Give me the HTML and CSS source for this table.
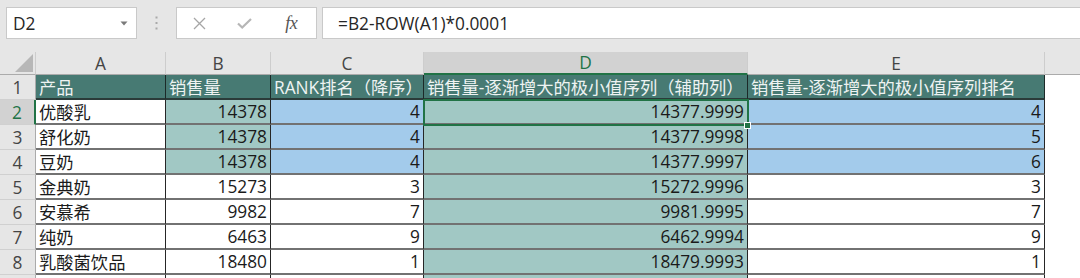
FILE: index.html
```html
<!DOCTYPE html>
<html lang="zh-CN">
<head>
<meta charset="utf-8">
<title>Excel</title>
<link rel="stylesheet" href="styles.css">
</head>
<body>
<div class="toolbar">
  <div class="namebox">
    <span class="ref">D2</span>
    <svg class="caret" width="8" height="5" viewBox="0 0 8 5"><path d="M0.5 0.5H7.5L4 4.5Z" fill="#7a7a7a"/></svg>
  </div>
  <div class="grip">
    <svg width="3" height="14" viewBox="0 0 3 14"><rect x="0.5" y="0.5" width="2" height="2" fill="#a9a9a9"/><rect x="0.5" y="6" width="2" height="2" fill="#a9a9a9"/><rect x="0.5" y="11.5" width="2" height="2" fill="#a9a9a9"/></svg>
  </div>
  <div class="fxbox">
    <span class="slot">
      <svg width="13" height="13" viewBox="0 0 13 13"><path d="M1 1L12 12M12 1L1 12" stroke="#a6a6a6" stroke-width="1.3" fill="none"/></svg>
    </span>
    <span class="slot">
      <svg width="15" height="11" viewBox="0 0 15 11"><path d="M1 5.5L5.2 9.5L14 1" stroke="#b6b6b6" stroke-width="2.2" fill="none"/></svg>
    </span>
    <span class="slot slot-fx"><span class="fx">fx</span></span>
  </div>
  <div class="formula">=B2-ROW(A1)*0.0001</div>
</div>

<div class="sheet">
  <div class="corner"><svg width="18" height="18" viewBox="0 0 18 18"><path d="M18 0V18H0Z" fill="#b7b7b7"/></svg></div>
  <div class="ch">A</div>
  <div class="ch">B</div>
  <div class="ch">C</div>
  <div class="ch sel">D</div>
  <div class="ch">E</div>
  <div class="ch last"></div>

  <div class="c rh">1</div>
  <div class="c hd">产品</div>
  <div class="c hd">销售量</div>
  <div class="c hd">RANK排名（降序）</div>
  <div class="c hd">销售量-逐渐增大的极小值序列（辅助列）</div>
  <div class="c hd">销售量-逐渐增大的极小值序列排名</div>
  <div class="c blank"></div>

  <div class="c rh sel">2</div>
  <div class="c">优酸乳</div>
  <div class="c num teal">14378</div>
  <div class="c num blue">4</div>
  <div class="c num teal active">14377.9999</div>
  <div class="c num blue">4</div>
  <div class="c blank"></div>

  <div class="c rh">3</div>
  <div class="c">舒化奶</div>
  <div class="c num teal">14378</div>
  <div class="c num blue">4</div>
  <div class="c num teal">14377.9998</div>
  <div class="c num blue">5</div>
  <div class="c blank"></div>

  <div class="c rh">4</div>
  <div class="c">豆奶</div>
  <div class="c num teal">14378</div>
  <div class="c num blue">4</div>
  <div class="c num teal">14377.9997</div>
  <div class="c num blue">6</div>
  <div class="c blank"></div>

  <div class="c rh">5</div>
  <div class="c">金典奶</div>
  <div class="c num">15273</div>
  <div class="c num">3</div>
  <div class="c num teal">15272.9996</div>
  <div class="c num">3</div>
  <div class="c blank"></div>

  <div class="c rh">6</div>
  <div class="c">安慕希</div>
  <div class="c num">9982</div>
  <div class="c num">7</div>
  <div class="c num teal">9981.9995</div>
  <div class="c num">7</div>
  <div class="c blank"></div>

  <div class="c rh">7</div>
  <div class="c">纯奶</div>
  <div class="c num">6463</div>
  <div class="c num">9</div>
  <div class="c num teal">6462.9994</div>
  <div class="c num">9</div>
  <div class="c blank"></div>

  <div class="c rh">8</div>
  <div class="c">乳酸菌饮品</div>
  <div class="c num">18480</div>
  <div class="c num">1</div>
  <div class="c num teal">18479.9993</div>
  <div class="c num">1</div>
  <div class="c blank"></div>

  <div class="c rh tail"></div>
  <div class="c tail"></div>
  <div class="c tail"></div>
  <div class="c tail"></div>
  <div class="c teal tail"></div>
  <div class="c tail"></div>
  <div class="c blank tail"></div>
</div>
</body>
</html>
```

FILE: styles.css
```css
html, body {
  margin: 0;
  padding: 0;
}

body {
  width: 1080px;
  height: 278px;
  overflow: hidden;
  background: #ffffff;
  font-family: "Open Sans", "Noto Sans CJK SC", sans-serif;
  font-size: 17.3px;
  color: #1a1a1a;
}

/* ---------- formula toolbar ---------- */
.toolbar {
  height: 52px;
  box-sizing: border-box;
  background: #e6e6e6;
  display: flex;
  align-items: flex-start;
  padding: 7px 0 0 6px;
}

.namebox {
  width: 131px;
  height: 32px;
  box-sizing: border-box;
  background: #ffffff;
  border: 1px solid #c9c9c9;
  display: flex;
  align-items: center;
  justify-content: space-between;
  padding: 0 8px 0 6px;
  color: #262626;
}

.grip {
  width: 39px;
  height: 32px;
  display: flex;
  align-items: center;
  justify-content: center;
}

.fxbox {
  width: 141px;
  height: 32px;
  box-sizing: border-box;
  background: #ffffff;
  border: 1px solid #c9c9c9;
  display: flex;
  align-items: center;
}

.slot {
  width: 45px;
  height: 100%;
  display: flex;
  align-items: center;
  justify-content: center;
}

.slot-fx {
  width: 50px;
}

.fx {
  font-family: "Liberation Serif", "DejaVu Serif", serif;
  font-style: italic;
  font-size: 18px;
  color: #555555;
  letter-spacing: -0.5px;
}

.formula {
  flex: 1;
  margin-left: 5px;
  height: 32px;
  box-sizing: border-box;
  background: #ffffff;
  border: 1px solid #c9c9c9;
  border-right: none;
  display: flex;
  align-items: center;
  padding-left: 15px;
  color: #262626;
}

/* ---------- sheet grid ---------- */
.sheet {
  display: grid;
  grid-template-columns: 36px 130px 105px 153px 324px 297px 1fr;
  grid-template-rows: 23px repeat(8, 25px) 3px;
}

.corner {
  background: #e6e6e6;
  border-right: 1px solid #cdcdcd;
  border-bottom: 1px solid #ababab;
  box-sizing: border-box;
  display: flex;
  align-items: flex-end;
  justify-content: flex-end;
  padding: 0 2px 2px 0;
}

.ch {
  background: #e6e6e6;
  box-sizing: border-box;
  border-right: 1px solid #cdcdcd;
  border-bottom: 1px solid #ababab;
  display: flex;
  align-items: center;
  justify-content: center;
  color: #444444;
}

.ch.sel {
  background: #d2d2d2;
  color: #217346;
  border-bottom: 2px solid #217346;
}

.ch.last {
  border-right: none;
}

.c {
  box-sizing: border-box;
  display: flex;
  align-items: center;
  padding: 0 3px;
  white-space: nowrap;
  overflow: hidden;
  border-right: 1px solid #262626;
  border-bottom: 2px solid #727272;
}

.c.tail {
  border-bottom: none;
}

.num {
  justify-content: flex-end;
}

.rh {
  background: #e6e6e6;
  justify-content: center;
  padding: 0;
  color: #444444;
  border-right: 1px solid #ababab;
  border-bottom: 1px solid #d0d0d0;
}

.rh.sel {
  background: #d2d2d2;
  color: #217346;
  border-right: 2px solid #217346;
}

.hd {
  background: #477a73;
  color: #eef3f2;
  border-right-color: #1c2a28;
  border-bottom-color: #2b3b39;
}

.teal {
  background: #a1c8c4;
}

.blue {
  background: #a3cbeb;
}

.blank {
  border: none;
  background: #ffffff;
}

.active {
  position: relative;
  z-index: 1;
  overflow: visible;
  outline: 2px solid #217346;
  outline-offset: -1px;
}

.active::after {
  content: "";
  position: absolute;
  right: -4px;
  bottom: -6px;
  width: 5px;
  height: 5px;
  background: #217346;
  border: 1px solid #ffffff;
}
```
